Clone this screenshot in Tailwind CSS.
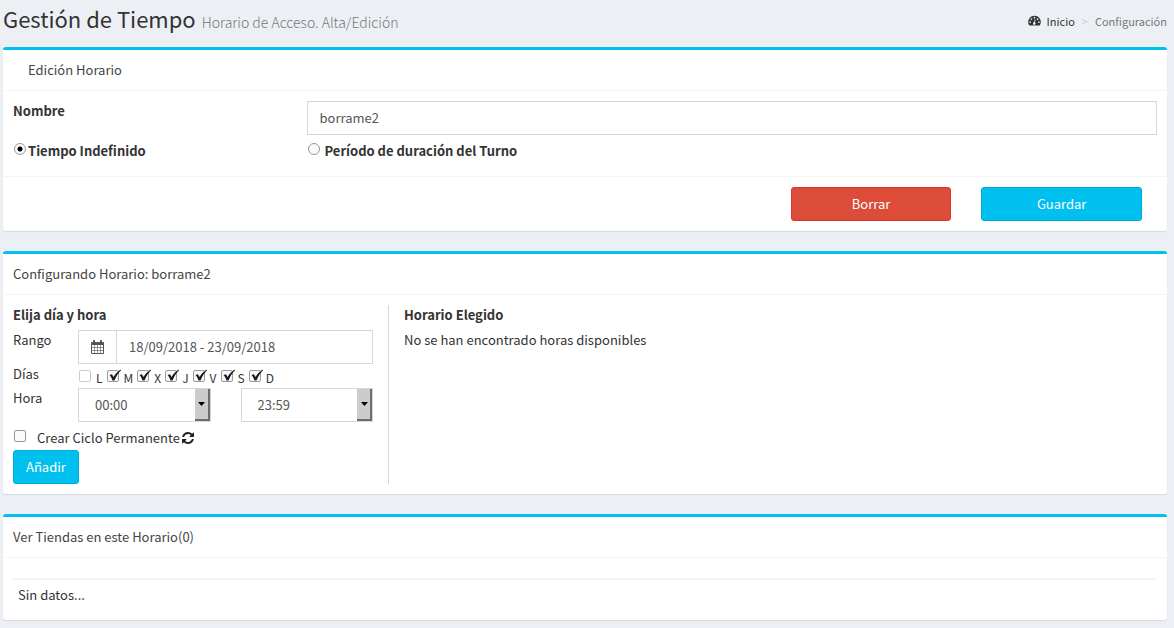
<!DOCTYPE html>
<html lang="es">
<head>
<meta charset="utf-8">
<meta name="viewport" content="width=device-width, initial-scale=1">
<title>Gestión de Tiempo</title>
<script src="https://cdn.jsdelivr.net/npm/@tailwindcss/browser@4"></script>
</head>
<body class="min-h-screen bg-[#ecf0f5] pl-[3px] pr-[7px] font-['Noto_Sans_CJK_SC','Open_Sans',sans-serif] text-[13px] leading-5 text-[#333]">
<svg class="hidden" aria-hidden="true">
  <symbol id="tick" viewBox="0 0 15 14"><path d="M2.500 6 5 5.200 6.500 8C8 5.500 10.500 2.500 13.500.5L14 1.200C11.200 4 9 7.500 7.500 11.500H5.500C4.800 9.500 4 7.600 2.500 6Z" fill="#1b1b1f"/></symbol>
</svg>

<header class="flex h-[47px] items-center justify-between pb-[7px]">
  <h1 class="flex items-baseline gap-1.5 text-[22px] leading-6">Gestión de Tiempo <small class="text-[14px] font-light text-[#777]">Horario de Acceso. Alta/Edición</small></h1>
  <nav aria-label="Ruta" class="flex items-center pt-px text-[11px] text-[#777]">
    <a href="#" class="flex items-center gap-1.5 text-[#333]">
      <svg class="h-[11px] w-[13px]" viewBox="0 0 14 11"><path fill="#333" d="M7 .3a6.800 6.800 0 0 0-5.700 10.400c.1.200.3.300.5.300h10.400c.2 0 .4-.1.500-.3A6.800 6.800 0 0 0 7 .3Z"/><g fill="#ecf0f5"><circle cx="2.300" cy="7.200" r=".95"/><circle cx="3.700" cy="3.900" r=".95"/><circle cx="7" cy="2.400" r=".95"/><circle cx="10.300" cy="3.900" r=".95"/><circle cx="11.700" cy="7.200" r=".95"/><path d="m7.300 4.300.8.200-.6 3a1.400 1.400 0 1 1-.9-.2Z"/></g></svg>
      Inicio</a>
    <span class="px-[7px] text-[#ccc]">&gt;</span>
    <span>Configuración</span>
  </nav>
</header>

<main class="flex flex-col gap-5">
  <section class="rounded-[3px] border-t-[3px] border-[#00c0ef] bg-white shadow-[0_1px_1px_rgba(0,0,0,0.1)]">
    <h2 class="border-b border-[#f4f4f4] px-[25px] py-[10px] text-[#444]">Edición Horario</h2>
    <form>
      <div class="grid grid-cols-4 gap-x-[30px] px-[10px] pt-[10px] pb-[15px]">
        <label for="nombre" class="font-bold">Nombre</label>
        <input id="nombre" type="text" value="borrame2" class="col-span-3 h-[34px] min-w-0 border border-[#d2d6de] bg-white px-3 pb-0.5 text-[#555]">
        <label class="mt-[6px] flex items-start gap-[2px] font-bold">
          <input type="radio" name="tipo" checked class="mt-[2px] ml-px size-3 shrink-0 appearance-none rounded-full border border-[#999] bg-[#fafafa] checked:bg-[radial-gradient(circle,#000_2px,#fafafa_3px)]">Tiempo Indefinido</label>
        <label class="col-span-3 mt-[6px] flex items-start gap-[5px] font-bold">
          <input type="radio" name="tipo" class="mt-[2px] ml-px size-3 shrink-0 appearance-none rounded-full border border-[#999] bg-[#fafafa] checked:bg-[radial-gradient(circle,#000_2px,#fafafa_3px)]">Período de duración del Turno</label>
      </div>
      <div class="border-t border-[#f4f4f4] p-[10px]">
        <div class="ml-auto grid w-1/3 grid-cols-2 gap-[30px] px-[15px]">
          <button type="button" class="h-[34px] rounded-[3px] border border-[#d73925] bg-[#dd4b39] text-white">Borrar</button>
          <button type="button" class="h-[34px] rounded-[3px] border border-[#00acd6] bg-[#00c0ef] text-white">Guardar</button>
        </div>
      </div>
    </form>
  </section>

  <section class="rounded-[3px] border-t-[3px] border-[#00c0ef] bg-white shadow-[0_1px_1px_rgba(0,0,0,0.1)]">
    <h2 class="border-b border-[#f4f4f4] p-[10px] text-[#444]">Configurando Horario: borrame2</h2>
    <div class="grid grid-cols-[376fr_768fr] p-[10px]">
      <form class="border-r border-[#d2d6de] pr-[15px]">
        <h3 class="mb-[5px] font-bold">Elija día y hora</h3>
        <div class="flex">
          <label for="rango" class="w-[65px] shrink-0">Rango</label>
          <div class="flex h-[34px] flex-1 border border-[#d2d6de]">
            <span class="flex w-[38px] items-center justify-center border-r border-[#d2d6de]">
              <svg class="h-[14px] w-[13px]" viewBox="0 0 13 14"><path fill="#555" d="M2 2V1c0-.6.4-1 1-1s1 .4 1 1v1h5V1c0-.6.400-1 1-1s1 .4 1 1v1h1c.6 0 1 .4 1 1v2H0V3c0-.6.4-1 1-1Z"/><path fill="none" stroke="#555" stroke-width="1" d="M.5 5v8.500h12V5"/><path fill="none" stroke="#555" stroke-opacity=".75" stroke-width=".8" d="M3.500 5v8.500M6.500 5v8.500M9.500 5v8.500M.5 7.500h12M.5 10.500h12"/></svg>
            </span>
            <input id="rango" type="text" value="18/09/2018 - 23/09/2018" class="min-w-0 flex-1 px-3 text-[#555]">
          </div>
        </div>
        <fieldset class="flex h-6">
          <legend class="float-left w-[65px] shrink-0">Días</legend>
          <div class="flex gap-1 pt-1 pl-px text-[12px]">
            <label class="relative flex gap-[5px]"><input type="checkbox" disabled class="mt-[2px] size-3 appearance-none rounded-[2px] border border-[#ccc] bg-white">L</label>
            <label class="relative flex gap-[5px]"><input type="checkbox" checked class="peer mt-[2px] size-3 appearance-none rounded-[2px] border border-[#999] bg-[#fafafa]"><svg class="pointer-events-none absolute top-px left-0 hidden h-[14px] w-[15px] peer-checked:block"><use href="#tick"/></svg>M</label>
            <label class="relative flex gap-[5px]"><input type="checkbox" checked class="peer mt-[2px] size-3 appearance-none rounded-[2px] border border-[#999] bg-[#fafafa]"><svg class="pointer-events-none absolute top-px left-0 hidden h-[14px] w-[15px] peer-checked:block"><use href="#tick"/></svg>X</label>
            <label class="relative flex gap-[5px]"><input type="checkbox" checked class="peer mt-[2px] size-3 appearance-none rounded-[2px] border border-[#999] bg-[#fafafa]"><svg class="pointer-events-none absolute top-px left-0 hidden h-[14px] w-[15px] peer-checked:block"><use href="#tick"/></svg>J</label>
            <label class="relative flex gap-[5px]"><input type="checkbox" checked class="peer mt-[2px] size-3 appearance-none rounded-[2px] border border-[#999] bg-[#fafafa]"><svg class="pointer-events-none absolute top-px left-0 hidden h-[14px] w-[15px] peer-checked:block"><use href="#tick"/></svg>V</label>
            <label class="relative flex gap-[5px]"><input type="checkbox" checked class="peer mt-[2px] size-3 appearance-none rounded-[2px] border border-[#999] bg-[#fafafa]"><svg class="pointer-events-none absolute top-px left-0 hidden h-[14px] w-[15px] peer-checked:block"><use href="#tick"/></svg>S</label>
            <label class="relative flex gap-[5px]"><input type="checkbox" checked class="peer mt-[2px] size-3 appearance-none rounded-[2px] border border-[#999] bg-[#fafafa]"><svg class="pointer-events-none absolute top-px left-0 hidden h-[14px] w-[15px] peer-checked:block"><use href="#tick"/></svg>D</label>
          </div>
        </fieldset>
        <div class="flex">
          <label for="desde" class="w-[65px] shrink-0">Hora</label>
          <div class="grid flex-1 grid-cols-2 gap-[30px]">
            <div class="relative">
              <select id="desde" class="h-[34px] w-full appearance-none border border-[#d2d6de] bg-white pl-4 text-[#555]"><option>00:00</option></select>
              <span class="pointer-events-none absolute inset-y-px right-px flex w-[15px] items-center justify-center border-r-2 border-b-2 border-[#6d6d6d] bg-[#ccc] pl-px"><svg class="h-1 w-[7px]" viewBox="0 0 7 4"><path d="M0 0h7L3.500 4Z"/></svg></span>
            </div>
            <div class="relative">
              <select aria-label="Hora hasta" class="h-[34px] w-full appearance-none border border-[#d2d6de] bg-white pl-4 text-[#555]"><option>23:59</option></select>
              <span class="pointer-events-none absolute inset-y-px right-px flex w-[15px] items-center justify-center border-r-2 border-b-2 border-[#6d6d6d] bg-[#ccc] pl-px"><svg class="h-1 w-[7px]" viewBox="0 0 7 4"><path d="M0 0h7L3.500 4Z"/></svg></span>
            </div>
          </div>
        </div>
        <label class="mt-[6px] mb-[2px] flex items-start">
          <input type="checkbox" class="mt-[2px] ml-px size-3 appearance-none rounded-[2px] border border-[#999] bg-[#fafafa]">
          <span class="ml-[11px]">Crear Ciclo Permanente</span>
          <svg class="mt-1 ml-[2px] size-3" viewBox="0 0 1536 1536"><path fill="#222" d="M1511 928q0 5-1 7-64 268-268 434.500T764 1536q-146 0-282.500-55T238 1324l-129 129q-19 19-45 19t-45-19-19-45V960q0-26 19-45t45-19h448q26 0 45 19t19 45-19 45l-137 137q71 66 161 102t187 36q134 0 250-65t186-179q11-17 53-117 8-23 30-23h192q13 0 22.500 9.500t9.500 22.500zm25-800v448q0 26-19 45t-45 19h-448q-26 0-45-19t-19-45 19-45l138-138Q969 256 768 256q-134 0-250 65T332 500q-11 17-53 117-8 23-30 23H50q-13 0-22.500-9.500T18 608v-7q65-268 270-434.500T768 0q146 0 284 55.500T1297 212l130-129q19-19 45-19t45 19 19 45z"/></svg>
        </label>
        <button type="button" class="h-[34px] rounded-[3px] border border-[#00acd6] bg-[#00c0ef] px-3 text-white">Añadir</button>
      </form>
      <div class="pl-[15px]">
        <h3 class="mb-[5px] font-bold">Horario Elegido</h3>
        <p>No se han encontrado horas disponibles</p>
      </div>
    </div>
  </section>

  <section class="rounded-[3px] border-t-[3px] border-[#00c0ef] bg-white shadow-[0_1px_1px_rgba(0,0,0,0.1)]">
    <h2 class="border-b border-[#f4f4f4] p-[10px] text-[#444]">Ver Tiendas en este Horario(0)</h2>
    <div class="px-[10px] pt-5 pb-[15px]">
      <table class="w-full"><tbody><tr class="border-t-2 border-[#f4f4f4]"><td class="px-[5px] pt-[5px]">Sin datos...</td></tr></tbody></table>
    </div>
  </section>
</main>
</body>
</html>
